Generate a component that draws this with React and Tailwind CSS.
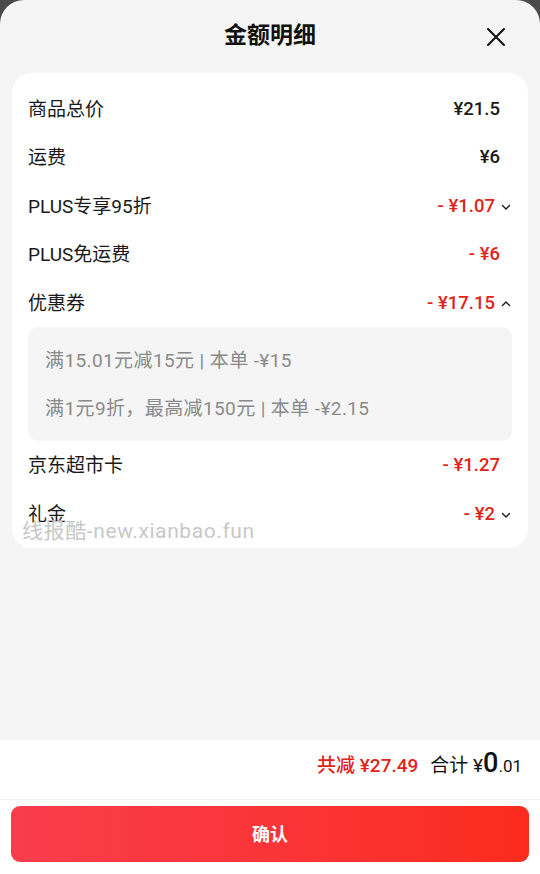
import React from "react";

const font = { fontFamily: 'Roboto, "Noto Sans CJK SC", "Noto Sans", sans-serif' };

const rows = [
  { label: "商品总价", value: "¥21.5" },
  { label: "运费", value: "¥6" },
  { label: "PLUS专享95折", value: "- ¥1.07", red: true, chevron: "down" },
  { label: "PLUS免运费", value: "- ¥6", red: true },
  { label: "优惠券", value: "- ¥17.15", red: true, chevron: "up" },
];

const coupons = ["满15.01元减15元 | 本单 -¥15", "满1元9折，最高减150元 | 本单 -¥2.15"];

const tailRows = [
  { label: "京东超市卡", value: "- ¥1.27", red: true },
  { label: "礼金", value: "- ¥2", red: true, chevron: "down" },
];

function Chevron({ dir }) {
  return (
    <svg width="10" height="10" viewBox="0 0 10 10" className="-mr-[11px] ml-[6px]">
      <path
        d={dir === "up" ? "M1.5 6.5 L5 3 L8.5 6.5" : "M1.5 3.5 L5 7 L8.5 3.5"}
        fill="none"
        stroke="#1a1a1a"
        strokeWidth="1.4"
        strokeLinecap="round"
        strokeLinejoin="round"
      />
    </svg>
  );
}

function Row({ row }) {
  return (
    <div className="flex h-[48.5px] items-center justify-between pr-3 pt-[3px]">
      <span className="text-[19px] text-[#1a1a1a]">{row.label}</span>
      <span className="flex items-center">
        <span className={`text-[18.5px] font-medium ${row.red ? "text-[#e2231a]" : "text-[#1a1a1a]"}`}>
          {row.value}
        </span>
        {row.chevron && <Chevron dir={row.chevron} />}
      </span>
    </div>
  );
}

export default function App() {
  return (
    <div className="h-[874px] w-[540px] bg-[#4a4a4a]" style={font}>
      <div className="flex h-full flex-col overflow-hidden rounded-t-[24px] bg-[#f5f5f5]">
        <div className="relative flex h-[73px] shrink-0 items-center justify-center">
          <span className="text-[23px] font-bold text-[#111]">金额明细</span>
          <svg width="20" height="20" viewBox="0 0 20 20" className="absolute right-[34px] top-[27px]">
            <path d="M2 2 L18 18 M18 2 L2 18" stroke="#111" strokeWidth="2" strokeLinecap="round" />
          </svg>
        </div>

        <div className="relative mx-3 rounded-[20px] bg-white pb-[10px] pl-4 pr-4 pt-[11px]">
          {rows.map((r) => (
            <Row key={r.label} row={r} />
          ))}
          <div className="rounded-[10px] bg-[#f5f5f5] px-[17px] py-[9px]">
            {coupons.map((c) => (
              <div key={c} className="flex h-12 items-center pt-[3px] text-[19px] tracking-[0.4px] text-[#8a8a8a]">
                {c}
              </div>
            ))}
          </div>
          {tailRows.map((r) => (
            <Row key={r.label} row={r} />
          ))}
          <div className="pointer-events-none absolute left-[10px] top-[443px] text-[21px] tracking-[0.6px] text-[#c8c8c8]">
            线报酷-new.xianbao.fun
          </div>
        </div>

        <div className="flex-1" />

        <div className="shrink-0 bg-white">
          <div className="flex h-[60px] items-end justify-end border-b border-[#f2f2f2] pb-[19px] pr-[18px]">
            <span className="text-[19px] font-medium text-[#e2231a]">共减 ¥27.49</span>
            <span className="ml-3 flex items-baseline text-[#111]">
              <span className="text-[19px]">合计 ¥</span>
              <span className="text-[27px] font-medium leading-none">0</span>
              <span className="text-[17px]">.01</span>
            </span>
          </div>
          <div className="px-[11px] pb-[12px] pt-[6px]">
            <button className="flex h-[56px] w-full items-center justify-center rounded-[9px] bg-gradient-to-r from-[#f93d4b] to-[#fb2b1c] text-[18px] font-bold text-white">
              确认
            </button>
          </div>
        </div>
      </div>
    </div>
  );
}
